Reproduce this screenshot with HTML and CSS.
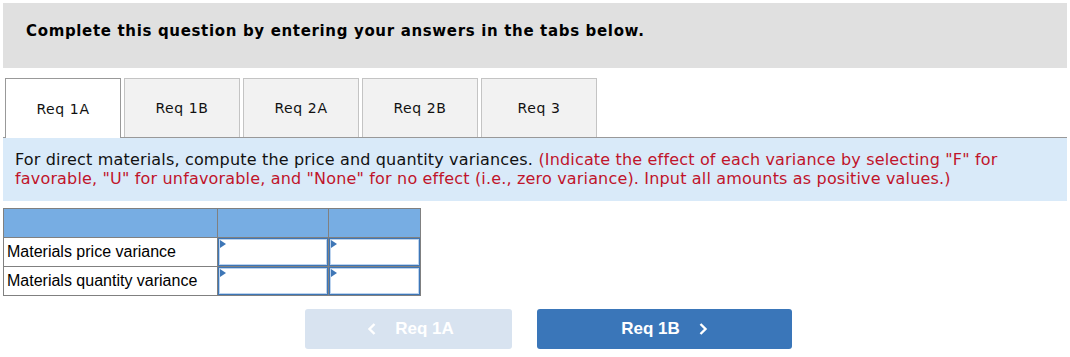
FILE: index.html
```html
<!DOCTYPE html>
<html lang="en">
<head>
    <meta charset="UTF-8">
    <title>Req 1A</title>
    <link rel="stylesheet" href="styles.css">
</head>
<body>
    <div class="aviso">
        <h2>Complete this question by entering your answers in the tabs below.</h2>
    </div>

    <div class="abas">
        <button class="aba ativa">Req 1A</button>
        <button class="aba">Req 1B</button>
        <button class="aba">Req 2A</button>
        <button class="aba">Req 2B</button>
        <button class="aba">Req 3</button>
    </div>

    <div class="enunciado">
        For direct materials, compute the price and quantity variances.
        <span class="instrucao">(Indicate the effect of each variance by selecting "F" for favorable, "U" for unfavorable, and "None" for no effect (i.e., zero variance). Input all amounts as positive values.)</span>
    </div>

    <table class="tabela">
        <tr class="cabeca">
            <th class="rotulo"></th>
            <th></th>
            <th></th>
        </tr>
        <tr>
            <td class="rotulo">Materials price variance</td>
            <td><div class="campo"></div></td>
            <td><div class="campo"></div></td>
        </tr>
        <tr>
            <td class="rotulo">Materials quantity variance</td>
            <td><div class="campo"></div></td>
            <td><div class="campo"></div></td>
        </tr>
    </table>

    <div class="navegacao">
        <button class="nav anterior">
            <svg class="seta" width="10" height="14" viewBox="0 0 10 14"><polyline points="7.5,2 2.5,7 7.5,12" /></svg>
            Req 1A
        </button>
        <button class="nav proximo">
            Req 1B
            <svg class="seta" width="10" height="14" viewBox="0 0 10 14"><polyline points="2.5,2 7.5,7 2.5,12" /></svg>
        </button>
    </div>
</body>
</html>
```

FILE: styles.css
```css
body {
    margin: 0;
    padding: 3px 3px 0 3px;
    font-family: "DejaVu Sans", Verdana, sans-serif;
    color: #000;
    background: #fff;
}
.aviso {
    background-color: #e0e0e0;
    height: 65px;
    box-sizing: border-box;
    padding: 19px 0 0 23px;
}
.aviso > h2 {
    margin: 0;
    font-size: 15px;
    font-weight: bold;
    letter-spacing: 0.66px;
}
.abas {
    display: flex;
    gap: 3px;
    margin-top: 10px;
    padding-left: 2px;
    border-bottom: 1px solid #999;
    height: 59px;
}
.aba {
    width: 116px;
    height: 59px;
    box-sizing: border-box;
    background-color: #f2f2f2;
    border: 1px solid #c4c4c4;
    border-bottom: none;
    font-family: "DejaVu Sans", Verdana, sans-serif;
    font-size: 14px;
    letter-spacing: 0.6px;
    color: #111;
    padding: 0;
    cursor: pointer;
}
.aba.ativa {
    background-color: #fff;
    border-color: #999;
    height: 60px;
    position: relative;
    z-index: 1;
}
.enunciado {
    background-color: #d9eaf9;
    padding: 12px 12px 11px 12px;
    font-size: 16px;
    line-height: 19px;
    height: 63px;
    box-sizing: border-box;
    color: #111;
    letter-spacing: 0.17px;
}
.instrucao {
    color: #c0142b;
}
.tabela {
    margin-top: 7px;
    border-collapse: collapse;
    font-family: "Liberation Sans", Arial, sans-serif;
    font-size: 16px;
}
.tabela th,
.tabela td {
    border: 1px solid #808080;
    padding: 0;
    height: 28px;
}
.cabeca th {
    background-color: #77ade3;
}
.tabela .rotulo {
    width: 210px;
    padding-left: 3px;
    text-align: left;
}
.tabela td:nth-child(2),
.tabela th:nth-child(2) {
    width: 110px;
}
.tabela td:nth-child(3),
.tabela th:nth-child(3) {
    width: 91px;
}
.campo {
    position: relative;
    height: 28px;
    box-sizing: border-box;
    border: 1px solid #3e76b6;
    box-shadow: inset 0 0 0 1px #bcd3ee;
    background: #fff;
}
.campo::before {
    content: "";
    position: absolute;
    left: 1px;
    top: 1px;
    border-top: 4px solid transparent;
    border-bottom: 4px solid transparent;
    border-left: 6px solid #3e76b6;
}
.navegacao {
    display: flex;
    gap: 25px;
    margin: 13px 0 0 302px;
}
.nav {
    height: 40px;
    border: none;
    border-radius: 3px;
    color: #fff;
    font-family: "Liberation Sans", Arial, sans-serif;
    font-size: 17px;
    font-weight: bold;
    cursor: pointer;
    display: flex;
    align-items: center;
    justify-content: center;
    gap: 18px;
    padding: 0;
}
.anterior {
    width: 207px;
    background-color: #d8e3f0;
    padding-left: 4px;
}
.proximo {
    width: 255px;
    background-color: #3a76b9;
}
.seta polyline {
    fill: none;
    stroke: #fff;
    stroke-width: 2.4;
}
```
